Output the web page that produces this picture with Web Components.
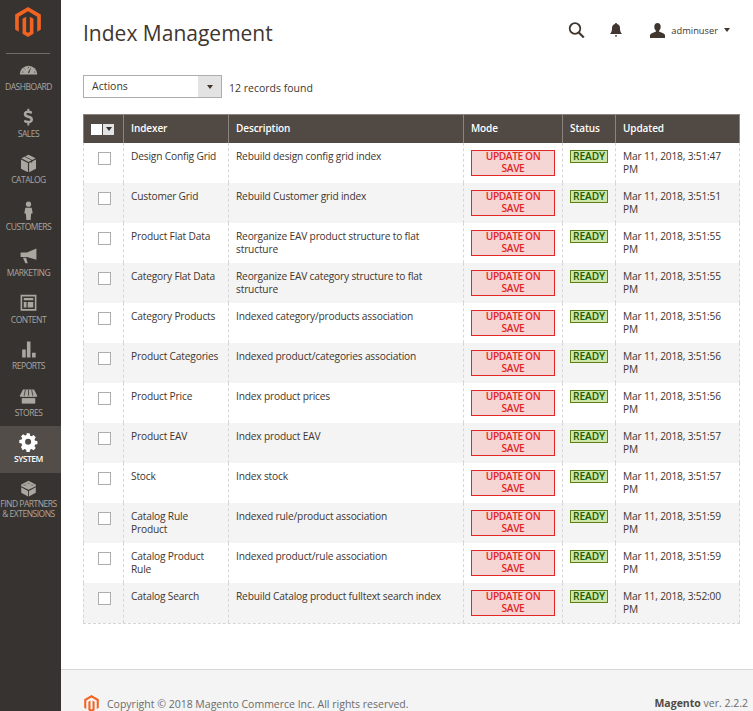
<!DOCTYPE html>
<html>
<head>
<meta charset="utf-8">
<title>Index Management</title>
<style>
  html, body { margin: 0; height: 711px; overflow: hidden; background: #fff; }
  body { font-family: "Open Sans", sans-serif; font-size: 10.5px; color: #41362f; display: flex; }
</style>
</head>
<body>
<admin-sidebar>
  <nav-item label="DASHBOARD" icon="dashboard"></nav-item>
  <nav-item label="SALES" icon="sales"></nav-item>
  <nav-item label="CATALOG" icon="catalog"></nav-item>
  <nav-item label="CUSTOMERS" icon="customers"></nav-item>
  <nav-item label="MARKETING" icon="marketing"></nav-item>
  <nav-item label="CONTENT" icon="content"></nav-item>
  <nav-item label="REPORTS" icon="reports"></nav-item>
  <nav-item label="STORES" icon="stores"></nav-item>
  <nav-item label="SYSTEM" icon="system" active></nav-item>
  <nav-item label="FIND PARTNERS &amp; EXTENSIONS" icon="partners"></nav-item>
</admin-sidebar>
<admin-main>
  <page-header title="Index Management"></page-header>
  <grid-toolbar count="12 records found"></grid-toolbar>
  <index-grid></index-grid>
  <admin-footer></admin-footer>
</admin-main>

<script>
const LOGO = `<path d="M12 0L0 7v14l3.4 2V9L12 4l8.6 5v14l3.4-2V7z"/><path d="M13.7 23L12 24l-1.7-1V9l-3.4 2v14l5.1 3 5.1-3V11l-3.4-2z"/>`;

const ICONS = {
  dashboard: `<path d="M1 17a11 11 0 0 1 22 0z" fill="#aaa6a0"/><path d="M15.5 7.500L11.200 14.500l1.600.9z" fill="#373330"/><path d="M4 14h1.500M6.500 9.500l1 1M12 7.500v1.500M19 14h1.500" stroke="#373330" stroke-width="1"/>`,
  sales: `<path d="M13 1h-2.400v2.300C7.600 3.700 6 5.600 6 7.900c0 5.300 8.400 4 8.400 6.800 0 1-1 1.500-2.400 1.500-1.700 0-3.300-.6-4.800-1.500L6 17.500c1.300.9 3 1.500 4.600 1.700V22H13v-2.800c3-.5 4.700-2.300 4.700-4.800 0-5.400-8.300-4.100-8.300-6.700 0-.9.8-1.300 2.100-1.300 1.500 0 2.800.5 4.100 1.200l1.200-2.900C15.700 4 14.400 3.500 13 3.300z" fill="#aaa6a0"/>`,
  catalog: `<path d="M12 1l9 4.500-9 4.500-9-4.500z" fill="#aaa6a0"/><path d="M2.500 7l8.800 4.400V23L2.500 18.500z" fill="#aaa6a0"/><path d="M21.500 7l-8.800 4.400V23l8.800-4.500z" fill="#aaa6a0"/><path d="M7 3l9 4.600v3.500" stroke="#373330" stroke-width="1" fill="none"/>`,
  customers: `<circle cx="12" cy="4" r="3.300" fill="#aaa6a0"/><path d="M8 8.500h8l1.300 7-2 .5-.6 8h-5.400l-.6-8-2-.5z" fill="#aaa6a0"/>`,
  marketing: `<path d="M22 2v14L10 12.500H2V7h8z" fill="#aaa6a0"/><path d="M5 13.500h4l2 7H8z" fill="#aaa6a0"/>`,
  content: `<path fill-rule="evenodd" d="M2 1h20v20H2zM4 3v16h16V3z" fill="#aaa6a0"/><path d="M6 5h12v3H6zM6 10h3.500v7H6zM11 10h7v7h-7z" fill="#aaa6a0"/>`,
  reports: `<path d="M4 12h4.500v10H4zM10 2h4.500v20H10zM16.500 16H21v6h-4.500z" fill="#aaa6a0"/>`,
  stores: `<path d="M5 3h14l4 8c0 1.500-2 2-3 1-1 1-2 1-3 0-1 1-2.500 1-3.500 0-1 1-2 1-3 0-1 1-2.500 1-3.500 0-1 1-2 1-3 0-1 1-3 .5-3-1z" fill="#aaa6a0"/><path d="M3.500 14h17v7h-17z" fill="#aaa6a0"/><path d="M8 3.500L6.500 11M12 3.500V11M16 3.500l1.500 7.500" stroke="#373330" stroke-width="1"/>`,
  system: `<path fill-rule="evenodd" d="M10 1h4l.6 3 2 .8 2.600-1.600 2.800 2.800-1.600 2.600.8 2 3 .6v4l-3 .6-.8 2 1.600 2.600-2.800 2.800-2.600-1.600-2 .8-.6 3h-4l-.6-3-2-.8-2.600 1.600L2.600 19l1.600-2.600-.8-2-3-.6v-4l3-.6.8-2L2.600 5 5.400 2.200 8 3.800l2-.8zM12 8a4 4 0 1 0 0 8 4 4 0 0 0 0-8z" fill="#fff" transform="translate(0 -.5) scale(.96)"/>`,
  partners: `<path d="M12 1l10 5v2.500L12 13.500 2 8.500V6z" fill="#aaa6a0"/><path d="M2 10l9.400 5v7.500L2 17.500zM22 10l-9.400 5v7.500l9.400-5z" fill="#aaa6a0"/><ellipse cx="12" cy="4.500" rx="2.500" ry="1.200" fill="#8c8883"/><ellipse cx="7" cy="7" rx="2.500" ry="1.200" fill="#8c8883"/><ellipse cx="17" cy="7" rx="2.500" ry="1.200" fill="#8c8883"/>`
};

class AdminSidebar extends HTMLElement {
  constructor() {
    super();
    this.attachShadow({ mode: "open" });
    this.shadowRoot.innerHTML = `
      <style>
        :host { display: flex; flex-direction: column; flex: none; width: 61px; height: 711px; background: #373330; }
        .logo { height: 54px; box-sizing: border-box; padding-top: 7px; display: flex; justify-content: center; position: relative; }
        .logo svg { width: 26px; height: 30px; fill: #f26322; margin-right: 5px; }
        .logo::after { content: ""; position: absolute; left: 6px; right: 11px; bottom: 0; height: 1px; background: #736d66; }
      </style>
      <div class="logo"><svg viewBox="0 0 24 28">${LOGO}</svg></div>
      <slot></slot>`;
  }
}

class NavItem extends HTMLElement {
  constructor() {
    super();
    this.attachShadow({ mode: "open" });
  }
  connectedCallback() {
    const icon = this.getAttribute("icon");
    const label = this.getAttribute("label");
    this.shadowRoot.innerHTML = `
      <style>
        :host { display: flex; flex-direction: column; align-items: center; height: 46.5px; box-sizing: border-box; padding: 7px 4px 0 0; color: #aaa6a0; font-size: 8.5px; line-height: 10px; text-align: center; }
        :host([active]) { background: #524d49; color: #fff; font-weight: 600; }
        svg { width: 19px; height: 19px; display: block; margin-bottom: 2px; }
        .t { white-space: pre-line; margin: 0 -3px; letter-spacing: -.5px; }
      </style>
      <svg viewBox="0 0 24 24">${ICONS[icon]}</svg>
      <div class="t">${label.replace(" & ", "\n& ").replace("&", "&amp;")}</div>`;
  }
}

class AdminMain extends HTMLElement {
  constructor() {
    super();
    this.attachShadow({ mode: "open" });
    this.shadowRoot.innerHTML = `
      <style>
        :host { display: flex; flex-direction: column; flex: 1; min-width: 0; height: 711px; overflow: hidden; }
      </style>
      <slot></slot>`;
  }
}

class PageHeader extends HTMLElement {
  constructor() {
    super();
    this.attachShadow({ mode: "open" });
  }
  connectedCallback() {
    this.shadowRoot.innerHTML = `
      <style>
        :host { display: flex; align-items: flex-start; height: 75px; box-sizing: border-box; padding-left: 22px; flex: none; }
        h1 { margin: 16px 0 0; font-size: 21px; line-height: 34px; font-weight: 400; color: #41362f; flex: 1; }
        .actions { display: flex; align-items: center; height: 16px; margin-top: 22px; color: #41362f; }
        svg { display: block; }
        .bell { margin-left: 25px; }
        .user { margin-left: 28px; }
        .name { margin-left: 6px; font-size: 9.300px; }
        .caret { width: 0; height: 0; border: 3.500px solid transparent; border-top: 4px solid #41362f; border-bottom: 0; margin: 0 23px 0 6px; }
      </style>
      <h1>${this.getAttribute("title")}</h1>
      <div class="actions">
        <svg width="17" height="16" viewBox="0 0 17 16" fill="none" stroke="#41362f" stroke-width="1.800"><circle cx="7" cy="6.500" r="5.300"/><path d="M10.800 10.500l5 5" stroke-width="2.200"/></svg>
        <svg class="bell" width="12" height="14" viewBox="0 0 12 14" fill="#41362f"><path d="M6 0c.7 0 1 .5 1 1 2 .5 3 2 3 4 0 3 .5 4.500 2 6H0c1.500-1.500 2-3 2-6 0-2 1-3.500 3-4 0-.5.3-1 1-1z"/><path d="M5 12.300h2V13.500H5z"/></svg>
        <svg class="user" width="15" height="15" viewBox="0 0 15 15" fill="#41362f"><path d="M7.500 0c2 0 3.200 1.500 3.200 3.700 0 1.600-.6 3-1.500 3.800v1.300c2 .7 5 1.500 5.800 3.200V15H0v-3c.8-1.700 3.800-2.500 5.800-3.200V7.500C4.900 6.700 4.300 5.300 4.300 3.700 4.300 1.500 5.500 0 7.500 0z"/></svg>
        <span class="name">adminuser</span>
        <span class="caret"></span>
      </div>`;
  }
}

class GridToolbar extends HTMLElement {
  constructor() {
    super();
    this.attachShadow({ mode: "open" });
  }
  connectedCallback() {
    this.shadowRoot.innerHTML = `
      <style>
        :host { display: flex; align-items: center; height: 23px; margin: 0 0 16px 22px; flex: none; }
        .select { display: flex; width: 139px; height: 23px; box-sizing: border-box; border: 1px solid #adadad; background: #fff; }
        .select span { flex: 1; padding-left: 8px; line-height: 20px; }
        .select i { width: 23px; background: #e3e3e3; display: flex; align-items: center; justify-content: center; }
        .select i::after { content: ""; border: 3.500px solid transparent; border-top: 4px solid #41362f; border-bottom: 0; }
        .count { margin-left: 7px; padding-top: 2px; }
      </style>
      <div class="select"><span>Actions</span><i></i></div>
      <div class="count">${this.getAttribute("count")}</div>`;
  }
}

const COLS = "40px 105px 235px 99px 53px 125px";

class GridRow extends HTMLElement {
  constructor() {
    super();
    this.attachShadow({ mode: "open" });
  }
  connectedCallback() {
    const g = (n) => this.getAttribute(n);
    this.shadowRoot.innerHTML = `
      <style>
        :host { display: grid; grid-template-columns: ${COLS}; height: 40px; background: #fff; font-size: 10.200px; letter-spacing: -.18px; }
        :host([alt]) { background: #f4f4f4; }
        .c { box-sizing: border-box; border-left: 1px dashed #d6d6d6; padding: 7px 7px 0; line-height: 13px; }
        .c:last-child { border-right: 1px dashed #d6d6d6; }
        .check { padding: 9px 0 0 14px; }
        .check i { display: block; width: 11px; height: 11px; border: 1px solid #adadad; background: #fff; }
        .mode { display: block; border: 1px solid #e22626; background: #f6d5d5; color: #e22626; font-weight: 600; text-align: center; text-transform: uppercase; line-height: 11.500px; width: 84px; box-sizing: border-box; padding: 0 6px 1px; font-size: 10.200px; letter-spacing: -.4px; }
        .ready { display: inline-block; vertical-align: top; border: 1px solid #5b8116; background: #d0e5a9; color: #185b00; font-weight: 600; text-transform: uppercase; line-height: 11px; padding: 0 2px; letter-spacing: -.1px; }
      </style>
      <div class="c check"><i></i></div>
      <div class="c">${g("indexer")}</div>
      <div class="c">${g("description")}</div>
      <div class="c"><span class="mode">Update on Save</span></div>
      <div class="c"><span class="ready">Ready</span></div>
      <div class="c">${g("updated")}</div>`;
  }
}

const ROWS = [
  ["Design Config Grid", "Rebuild design config grid index", "Mar 11, 2018, 3:51:47 PM"],
  ["Customer Grid", "Rebuild Customer grid index", "Mar 11, 2018, 3:51:51 PM"],
  ["Product Flat Data", "Reorganize EAV product structure to flat structure", "Mar 11, 2018, 3:51:55 PM"],
  ["Category Flat Data", "Reorganize EAV category structure to flat structure", "Mar 11, 2018, 3:51:55 PM"],
  ["Category Products", "Indexed category/products association", "Mar 11, 2018, 3:51:56 PM"],
  ["Product Categories", "Indexed product/categories association", "Mar 11, 2018, 3:51:56 PM"],
  ["Product Price", "Index product prices", "Mar 11, 2018, 3:51:56 PM"],
  ["Product EAV", "Index product EAV", "Mar 11, 2018, 3:51:57 PM"],
  ["Stock", "Index stock", "Mar 11, 2018, 3:51:57 PM"],
  ["Catalog Rule Product", "Indexed rule/product association", "Mar 11, 2018, 3:51:59 PM"],
  ["Catalog Product Rule", "Indexed product/rule association", "Mar 11, 2018, 3:51:59 PM"],
  ["Catalog Search", "Rebuild Catalog product fulltext search index", "Mar 11, 2018, 3:52:00 PM"]
];

class IndexGrid extends HTMLElement {
  constructor() {
    super();
    this.attachShadow({ mode: "open" });
  }
  connectedCallback() {
    const rows = ROWS.map((r, i) =>
      `<grid-row indexer="${r[0]}" description="${r[1]}" updated="${r[2]}"${i % 2 ? " alt" : ""}></grid-row>`
    ).join("");
    this.shadowRoot.innerHTML = `
      <style>
        :host { display: block; width: 657px; margin-left: 22px; border-bottom: 1px dashed #d6d6d6; flex: none; }
        .head { display: grid; grid-template-columns: ${COLS}; height: 29px; background: #514943; border-top: 1px solid #8a837f; box-sizing: border-box; color: #fff; font-weight: 600; font-size: 10px; letter-spacing: -.1px; }
        .head div { box-sizing: border-box; border-left: 1px solid #8a837f; padding: 0 7px; line-height: 27px; }
        .head div:last-child { border-right: 1px solid #8a837f; }
        .head .sel { display: flex; align-items: center; padding: 0 0 0 7px; }
        .sel b { width: 11px; height: 11px; background: #fff; }
        .sel i { width: 11px; height: 11px; margin-left: 1px; background: #e3e3e3; display: flex; align-items: center; justify-content: center; }
        .sel i::after { content: ""; border: 3px solid transparent; border-top: 4px solid #303030; border-bottom: 0; }
      </style>
      <div class="head">
        <div class="sel"><b></b><i></i></div>
        <div>Indexer</div><div>Description</div><div>Mode</div><div>Status</div><div>Updated</div>
      </div>
      ${rows}`;
  }
}

class AdminFooter extends HTMLElement {
  constructor() {
    super();
    this.attachShadow({ mode: "open" });
    this.shadowRoot.innerHTML = `
      <style>
        :host { display: flex; align-items: flex-start; justify-content: space-between; flex: 1; margin-top: 45px; box-sizing: border-box; border-top: 1px solid #d6d6d6; background: #f4f4f4; padding: 25px 5px 0 23px; color: #6b6b6b; }
        .left { display: flex; align-items: center; }
        svg { width: 15px; height: 17px; fill: #f26322; margin-right: 8px; flex: none; }
        b { font-weight: 700; color: #514943; }
      </style>
      <div class="left"><svg viewBox="0 0 24 28">${LOGO}</svg>Copyright © 2018 Magento Commerce Inc. All rights reserved.</div>
      <div style="padding-top:1px"><b>Magento</b> ver. 2.2.2</div>`;
  }
}

customElements.define("admin-sidebar", AdminSidebar);
customElements.define("nav-item", NavItem);
customElements.define("admin-main", AdminMain);
customElements.define("page-header", PageHeader);
customElements.define("grid-toolbar", GridToolbar);
customElements.define("grid-row", GridRow);
customElements.define("index-grid", IndexGrid);
customElements.define("admin-footer", AdminFooter);
</script>
</body>
</html>
